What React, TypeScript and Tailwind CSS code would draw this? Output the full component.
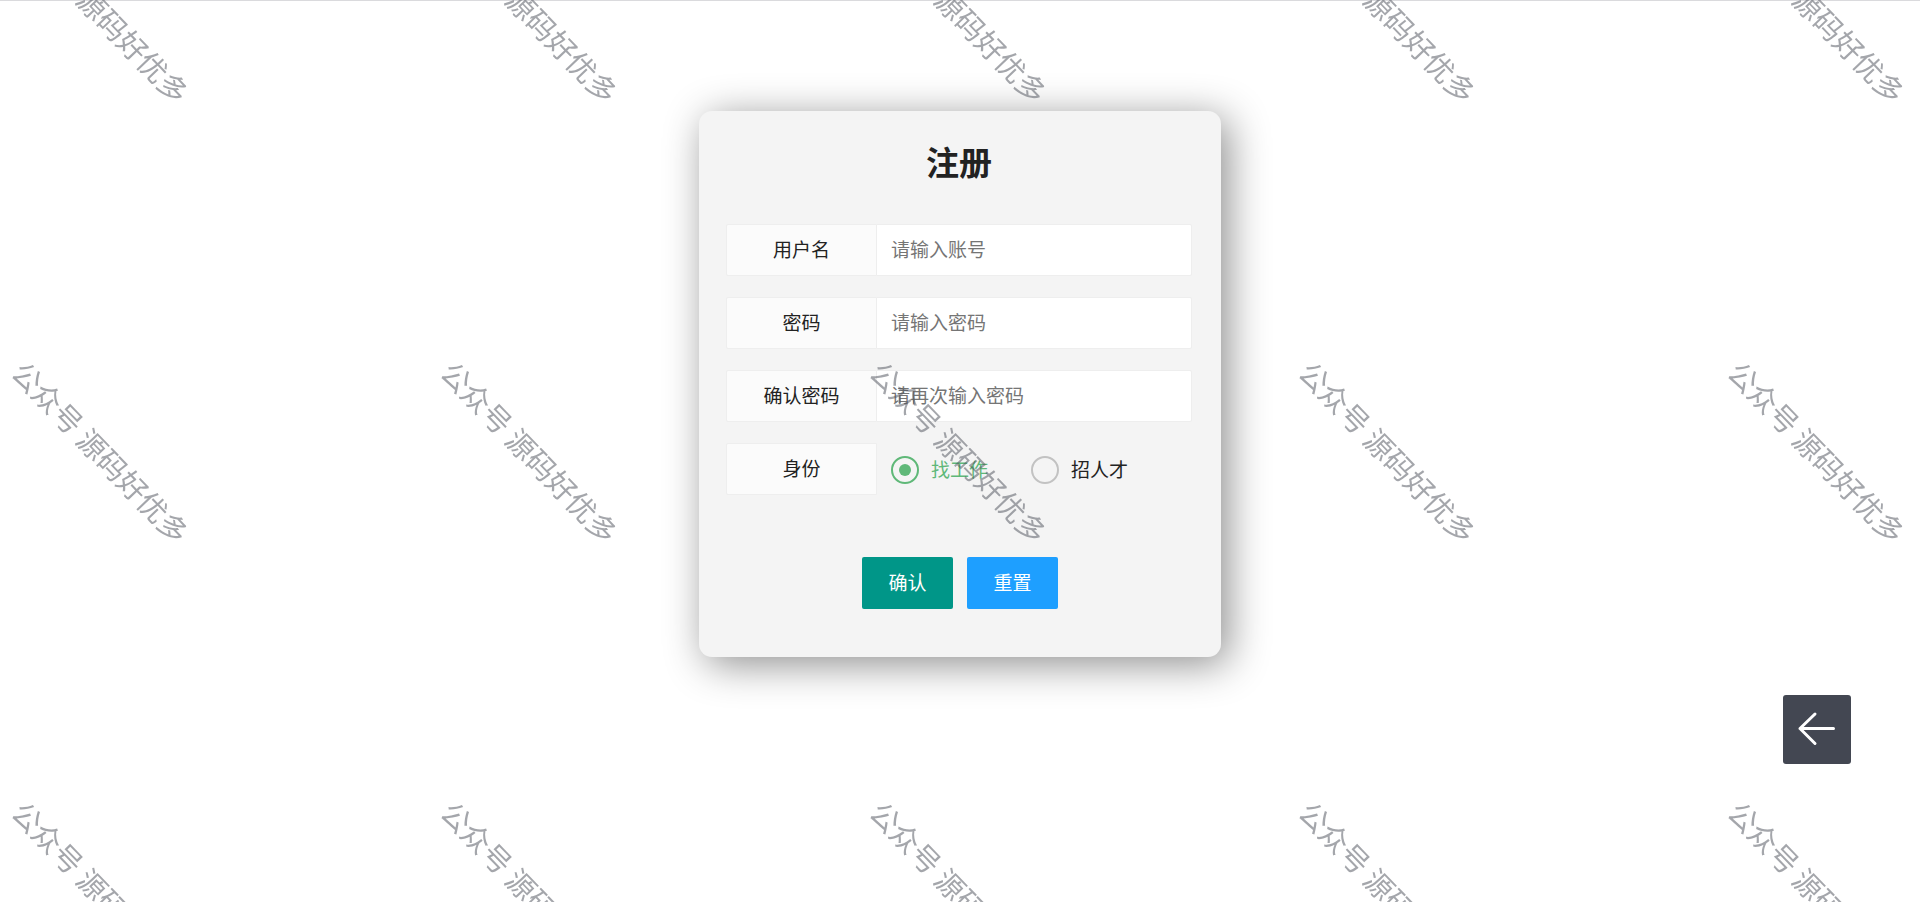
import { useState } from 'react';

const fields = [
  { id: 'username', label: '用户名', placeholder: '请输入账号', type: 'text' },
  { id: 'password', label: '密码', placeholder: '请输入密码', type: 'password' },
  { id: 'confirm', label: '确认密码', placeholder: '请再次输入密码', type: 'password' },
];

const roles = [
  { value: 'seeker', label: '找工作' },
  { value: 'recruiter', label: '招人才' },
];

const labelBox =
  'flex w-[151px] shrink-0 items-center justify-center rounded-l-[2px] border border-[#eee] bg-[#fbfbfb] pb-[2px]';

function Watermark() {
  return (
    <div aria-hidden="true" className="pointer-events-none fixed inset-0 z-20 overflow-hidden">
      <div className="absolute -left-[113px] -top-[209px] grid auto-rows-[440px] grid-cols-[repeat(5,429px)]">
        {Array.from({ length: 15 }, (_, i) => (
          <div key={i} className="flex items-center justify-center">
            <span className="rotate-46 whitespace-nowrap text-[29px] font-normal leading-none text-[#494d57]/50">
              公众号 源码好优多
            </span>
          </div>
        ))}
      </div>
    </div>
  );
}

export default function App() {
  const [role, setRole] = useState('seeker');

  return (
    <div className="min-h-screen border-t border-[#dadadd] bg-white px-4 font-['Noto_Sans_CJK_SC',sans-serif] text-[19px] font-normal text-[#222]">
      <main className="mx-auto mt-[110px] max-w-[522px] rounded-[13px] bg-[#f4f4f4] pb-12 pl-[27px] pr-[29px] pt-[26px] shadow-[7px_7px_40px_rgba(0,0,0,0.45)]">
        <h1 className="mb-[39px] text-center text-[33px] font-bold leading-[48px]">注册</h1>
        <form className="flex flex-col gap-[21px]" onSubmit={(e) => e.preventDefault()}>
          {fields.map((f) => (
            <div key={f.id} className="flex h-[52px]">
              <label htmlFor={f.id} className={labelBox}>
                {f.label}
              </label>
              <input
                id={f.id}
                type={f.type}
                placeholder={f.placeholder}
                className="-ml-px min-w-0 flex-1 rounded-r-[2px] border border-[#eee] bg-white pb-[2px] pl-[14px] outline-none placeholder:text-[#757575]"
              />
            </div>
          ))}
          <div role="radiogroup" aria-labelledby="role-label" className="flex h-[52px]">
            <span id="role-label" className={labelBox}>
              身份
            </span>
            <div className="flex items-center gap-[43px] pl-[14px] pt-[2px]">
              {roles.map((r) => (
                <label
                  key={r.value}
                  className="flex cursor-pointer items-center gap-3 whitespace-nowrap has-checked:text-[#5fb878]"
                >
                  <input
                    type="radio"
                    name="role"
                    value={r.value}
                    checked={role === r.value}
                    onChange={() => setRole(r.value)}
                    className="grid size-7 appearance-none place-items-center rounded-full border-2 border-[#c2c2c2] before:size-3 before:rounded-full before:content-[''] checked:border-[#5fb878] checked:before:bg-[#5fb878]"
                  />
                  <span className="pb-[2px]">{r.label}</span>
                </label>
              ))}
            </div>
          </div>
          <div className="mt-[41px] flex justify-center gap-[14px] pl-[2px] text-white">
            <button type="submit" className="h-[52px] w-[91px] rounded-[2px] bg-[#009688] pb-[2px]">
              确认
            </button>
            <button type="reset" className="h-[52px] w-[91px] rounded-[2px] bg-[#1e9fff] pb-[2px]">
              重置
            </button>
          </div>
        </form>
      </main>

      <button
        type="button"
        aria-label="返回"
        className="fixed bottom-[138px] right-[69px] z-10 flex h-[69px] w-[68px] items-center justify-center rounded-[3px] bg-[#434752]"
      >
        <svg viewBox="0 0 68 69" className="h-[69px] w-[68px]" fill="none" stroke="#fff" strokeWidth="3" strokeLinecap="round" strokeLinejoin="round">
          <path d="M50.5 33.5H17M32 19 17 33.5 32 48.5" />
        </svg>
      </button>
      <Watermark />
    </div>
  );
}
